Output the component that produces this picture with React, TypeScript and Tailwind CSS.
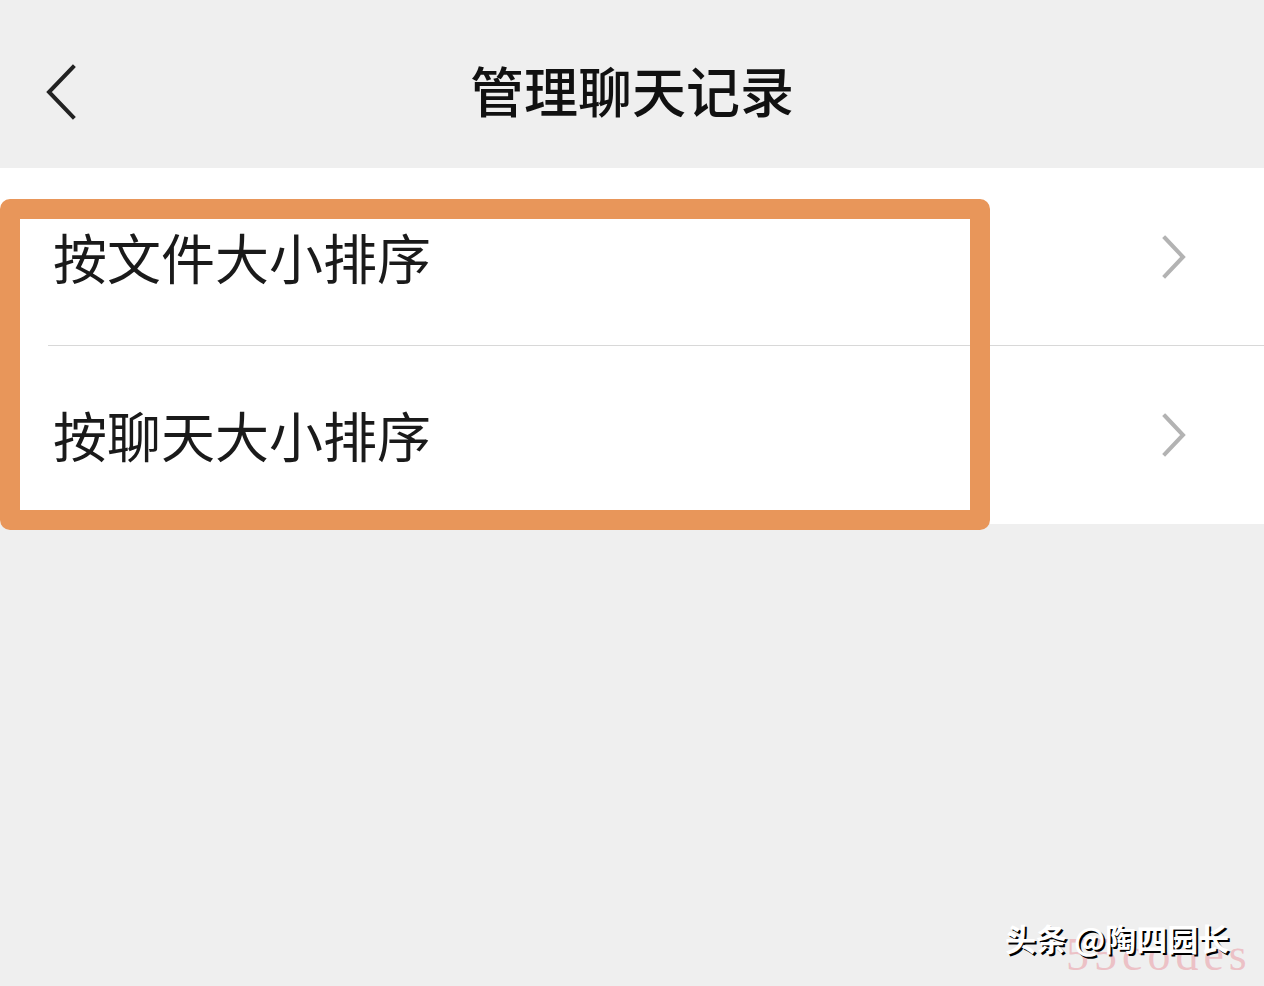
const cjk = "font-['Noto_Sans_CJK_SC','Noto_Sans',sans-serif]"

const BackIcon = () => (
  <svg width="40" height="60" viewBox="0 0 40 60" fill="none" stroke="#222" strokeWidth="4" strokeLinecap="square">
    <path d="M31 5 L7 30 L31 55" />
  </svg>
)

const Chevron = () => (
  <svg width="30" height="46" viewBox="0 0 30 46" fill="none" stroke="#b3b3b3" strokeWidth="4" strokeLinecap="square">
    <path d="M5 4 L23 23 L5 42" />
  </svg>
)

const Row = ({ label, last }: { label: string; last?: boolean }) => (
  <div className="relative flex items-center justify-between h-[178px] pl-[53px] pr-[74px]">
    <span className={`${cjk} text-[54px] leading-none text-[#1a1a1a]`}>{label}</span>
    <Chevron />
    {!last && <div className="absolute left-[48px] right-0 bottom-0 h-px bg-[#d8d8d8]" />}
  </div>
)

export default function App() {
  return (
    <div className="relative w-[1264px] h-[986px] bg-[#efefef] overflow-hidden">
      <header className="relative flex items-center justify-center h-[168px] pt-[12px]">
        <div className="absolute left-[42px] top-[62px]">
          <BackIcon />
        </div>
        <h1 className={`${cjk} text-[54px] font-medium leading-none text-[#111]`}>管理聊天记录</h1>
      </header>

      <div className="bg-white">
        <Row label="按文件大小排序" />
        <Row label="按聊天大小排序" last />
      </div>

      {/* highlight annotation */}
      <div className="absolute left-0 top-[199px] w-[990px] h-[331px] border-[20px] border-[#e8965a] rounded-[10px] pointer-events-none" />

      {/* watermark */}
      <div className="absolute left-[1066px] top-[932px] font-['Liberation_Serif',serif] text-[46px] leading-none tracking-[5px] text-[#eaa2aa]/60">
        55codes
      </div>
      <div className={`absolute left-[1005px] top-[922px] ${cjk} text-[31px] font-bold leading-none text-white [text-shadow:2px_2px_0_#000]`}>
        头条 @陶四园长
      </div>
    </div>
  )
}
